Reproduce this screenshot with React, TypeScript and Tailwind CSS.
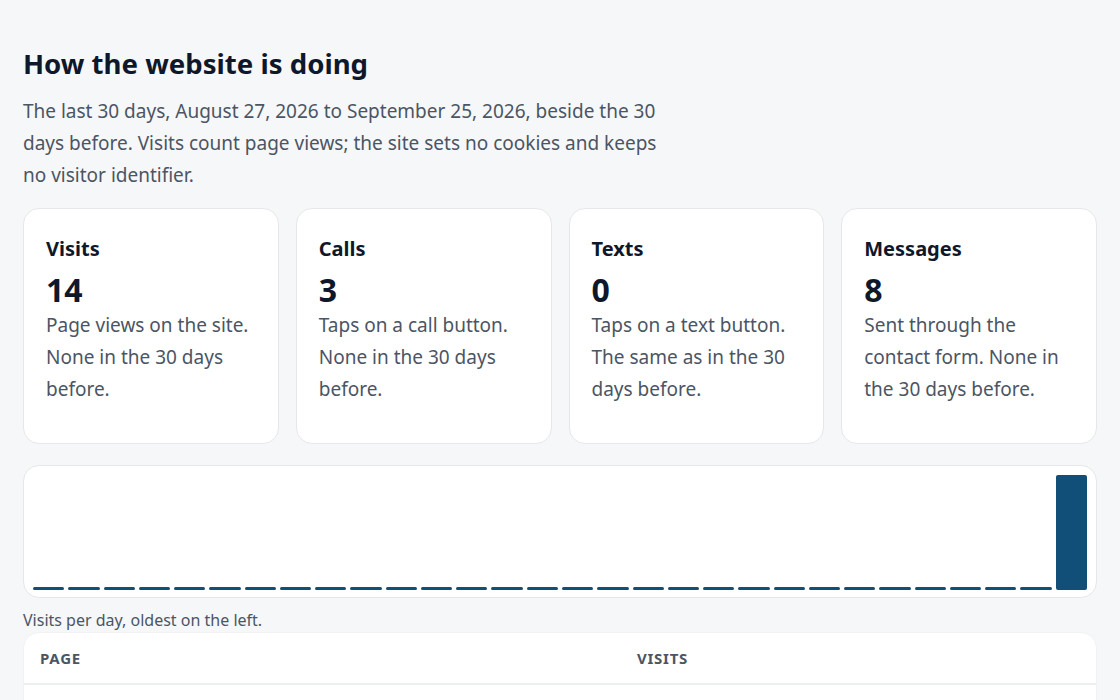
import React from 'react'

const stats = [
    { title: 'Visits', value: '14', note: 'Page views on the site. None in the 30 days before.' },
    { title: 'Calls', value: '3', note: 'Taps on a call button. None in the 30 days before.' },
    { title: 'Texts', value: '0', note: 'Taps on a text button. The same as in the 30 days before.' },
    { title: 'Messages', value: '8', note: 'Sent through the contact form. None in the 30 days before.' },
]

// 30 days, only the last one has visits
const days = Array.from({ length: 30 }, (_, i) => (i === 29 ? 14 : 0))
const maxDay = Math.max(...days)

const App = () => {
    return (
        <div className="min-h-screen bg-[#f6f7f9] text-[#0f172a]" style={{ fontFamily: '"Noto Sans", "Open Sans", sans-serif' }}>
            <main className="px-[23px] pt-[43px] pb-6">
                <h1 className="text-[27.6px] leading-[40px] font-bold">How the website is doing</h1>
                <p className="mt-[12px] max-w-[650px] text-[19px] leading-[32px] text-[#4b5563]">
                    The last 30 days, August 27, 2026 to September 25, 2026, beside the 30 days before. Visits count page views; the site sets no cookies and keeps no visitor identifier.
                </p>

                <div className="mt-[17px] grid grid-cols-4 gap-[17px]">
                    {stats.map((s) => (
                        <div key={s.title} className="min-h-[236px] rounded-2xl border border-[#e5e7eb] bg-white px-[22px] pt-[24px] pb-6">
                            <h2 className="text-[20px] leading-[32px] font-bold">{s.title}</h2>
                            <div className="mt-[3px] text-[32px] leading-[44px] font-bold">{s.value}</div>
                            <p className="-mt-[3px] text-[19px] leading-[32px] text-[#4b5563]">{s.note}</p>
                        </div>
                    ))}
                </div>

                <div className="mt-[21px] h-[133px] rounded-2xl border border-[#e5e7eb] bg-white px-[9px] pt-[9px] pb-[7px]">
                    <div className="flex h-full items-end gap-[4px]">
                        {days.map((d, i) => (
                            <div
                                key={i}
                                className="flex-1 rounded-[2px] bg-[#114e78]"
                                style={{ height: d === 0 ? '3px' : `${(d / maxDay) * 100}%` }}
                            />
                        ))}
                    </div>
                </div>
                <p className="mt-[11px] text-[16px] leading-[22px] text-[#4b5563]">Visits per day, oldest on the left.</p>

                <div className="mt-[1px] rounded-2xl border border-[#f1f2f4] bg-white">
                    <table className="w-full text-left">
                        <thead>
                            <tr className="border-b-2 border-[#eceef1]">
                                <th className="w-[597px] px-[16px] py-[13px] text-[15px] leading-[24px] font-bold uppercase tracking-[0.05em] text-[#4b5563]">Page</th>
                                <th className="px-[16px] py-[13px] text-[15px] leading-[24px] font-bold uppercase tracking-[0.05em] text-[#4b5563]">Visits</th>
                            </tr>
                        </thead>
                        <tbody>
                            <tr>
                                <td className="px-[16px] pt-[18px] pb-[14px] text-[17px] leading-[28px]">/</td>
                                <td className="px-[16px] pt-[18px] pb-[14px] text-[17px] leading-[28px]">14</td>
                            </tr>
                        </tbody>
                    </table>
                </div>
            </main>
        </div>
    )
}

export default App
